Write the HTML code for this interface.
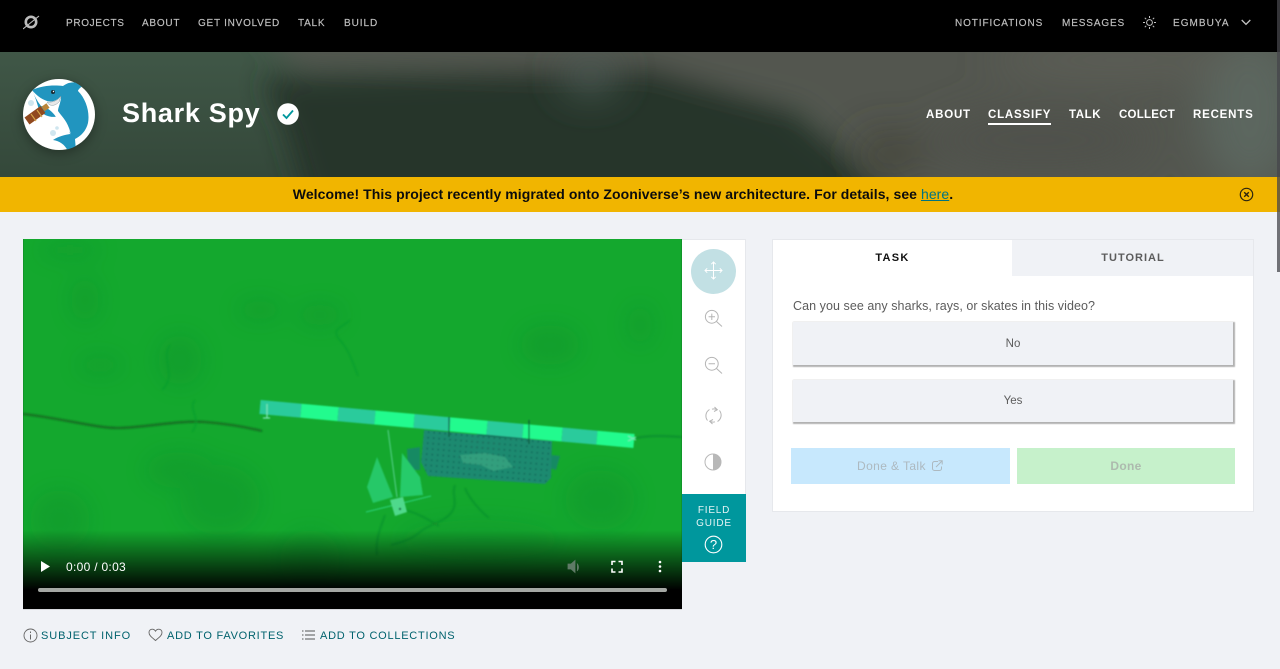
<!DOCTYPE html>
<html lang="en"><head><meta charset="utf-8"><title>Shark Spy</title>
<style>
html,body{margin:0;padding:0;width:1280px;height:669px;overflow:hidden;background:#f0f2f6;font-family:"Liberation Sans",sans-serif}
.a{position:absolute;white-space:nowrap}
a{text-decoration:none;color:inherit}
#top span{position:absolute;top:16px;line-height:13px;font-size:10px;letter-spacing:.75px;color:#c0c0c0;white-space:nowrap;-webkit-text-stroke:.15px #c0c0c0;padding-top:1px}
#pn span{position:absolute;top:108px;line-height:14px;font-size:11.5px;letter-spacing:.8px;color:#fff;font-weight:bold;white-space:nowrap}
svg{position:absolute;display:block}
</style></head><body>
<div class="a" style="left:0;top:0;width:1280px;height:52px;background:#000"></div>

<svg style="left:0;top:52px" width="1280" height="125" viewBox="0 52 1280 125">
<defs>
<linearGradient id="hg" x1="0" y1="0" x2="0" y2="1"><stop offset="0" stop-color="#405747"/><stop offset="1" stop-color="#34483a"/></linearGradient>
<filter id="b" x="-20%" y="-50%" width="140%" height="200%"><feGaussianBlur stdDeviation="13"/></filter>
<filter id="b2" x="-30%" y="-80%" width="160%" height="260%"><feGaussianBlur stdDeviation="20"/></filter></defs>
<rect x="0" y="52" width="1280" height="125" fill="url(#hg)"/>
<g filter="url(#b)">
<polygon points="250,20 1320,20 1320,220 920,220 800,110 660,72 300,68" fill="#52564f"/>
<polygon points="262,78 650,68 790,110 915,215 310,215 285,130" fill="#28352b"/>
</g>
<g filter="url(#b2)">
<ellipse cx="1250" cy="110" rx="50" ry="80" fill="#5c665f"/>
<ellipse cx="1040" cy="140" rx="110" ry="30" fill="#4f514b"/>
<ellipse cx="890" cy="155" rx="35" ry="24" fill="#3f4034" opacity=".7"/>
<ellipse cx="1120" cy="60" rx="130" ry="14" fill="#5e6059"/>
<ellipse cx="590" cy="76" rx="28" ry="18" fill="#4d5b56"/>
</g>
</svg>

<!-- top nav -->
<svg style="left:23px;top:14px" width="18" height="18" viewBox="0 0 18 18" fill="none" stroke="#bcbcbc"><circle cx="8" cy="8" r="5.200" stroke-width="2.600"/><path d="M0 15L16 2" stroke-width="1.100"/></svg>
<div id="top">
<span style="left:66px;letter-spacing:.65px">PROJECTS</span><span style="left:142px">ABOUT</span><span style="left:198px">GET INVOLVED</span><span style="left:298px">TALK</span><span style="left:344px;letter-spacing:.95px">BUILD</span>
<span style="left:955px;letter-spacing:.9px">NOTIFICATIONS</span><span style="left:1062px;letter-spacing:.87px">MESSAGES</span><span style="left:1173px;letter-spacing:1.05px">EGMBUYA</span>
</div>
<svg style="left:1143px;top:16px" width="13" height="13" viewBox="0 0 13 13" fill="none" stroke="#c4c4c4" stroke-width="1"><circle cx="6.500" cy="6.500" r="2.900"/><path d="M6.500 0v2M6.500 11v2M0 6.500h2M11 6.500h2M1.800 1.800l1.400 1.400M9.800 9.800l1.400 1.400M1.800 11.200l1.400-1.400M9.800 3.200l1.400-1.400"/></svg>
<svg style="left:1241px;top:19px" width="10" height="7" viewBox="0 0 10 7" fill="none" stroke="#c4c4c4" stroke-width="1.300"><path d="M.7 1l4.300 4.300L9.300 1"/></svg>

<!-- avatar -->
<div class="a" style="left:23px;top:79px;width:72px;height:71px;border-radius:50%;background:#fff;box-shadow:0 3px 12px rgba(0,0,0,.35)"></div>
<svg style="left:23px;top:79px" width="72" height="72" viewBox="0 0 72 72">
<defs><clipPath id="c"><circle cx="36" cy="35.500" r="35.800"/></clipPath></defs>
<g clip-path="url(#c)">
<circle cx="8" cy="24" r="3" fill="#cfe6ef"/><circle cx="30" cy="54" r="3" fill="#cfe6ef"/><circle cx="34" cy="49" r="1.800" fill="#cfe6ef"/>
<path d="M9 11C20 6 32 6 40 7C44 4 50 1 62 6C57 8 55 11 55 12C63 20 67 33 65 44C63 52 58 57 52 60L53 72L45 72C42 66 37 62 30 61C36 57 42 56 47 55C46 48 42 42 36 37C30 39 22 38 16 31C14 24 12 17 9 11z" fill="#2195bf"/>
<path d="M9 11C13 16 18 20 24 22C30 24 36 20 38 17C38 24 35 28 35 32C39 38 45 42 48 56C45 47 39 42 33 38C30 33 24 28 18 27C14 22 11 16 9 11z" fill="#fff"/>
<path d="M24 23C30 24 35 21 38 17L36 23C32 27 27 28 24 23z" fill="#e8e8e8" stroke="#8a9a9f" stroke-width=".5"/>
<circle cx="30" cy="13" r="2" fill="#1c2c33"/><circle cx="30.500" cy="12.500" r=".7" fill="#fff"/>
<path d="M4 42L20 30.500" stroke="#91491f" stroke-width="8.500"/>
<path d="M20 30L25 26.500" stroke="#b9853a" stroke-width="5.500"/>
<path d="M8 35l5 7M14 31l5 7" stroke="#d6a648" stroke-width="1.100"/>
</g>
</svg>

<div class="a" style="left:122px;top:96px;line-height:34px;font-size:27px;letter-spacing:.7px;color:#fff;font-weight:bold;">Shark Spy</div>
<svg style="left:277px;top:103px" width="22" height="22" viewBox="0 0 22 22"><circle cx="11" cy="11" r="10.800" fill="#fff"/><path d="M6 11.500l3.500 3.500L16 7.500" fill="none" stroke="#00979d" stroke-width="1.800"/></svg>

<div id="pn">
<span style="left:926px">ABOUT</span><span style="left:988px">CLASSIFY</span><span style="left:1069px;letter-spacing:.6px">TALK</span><span style="left:1119px;letter-spacing:.25px">COLLECT</span><span style="left:1193px">RECENTS</span>
</div>
<div class="a" style="left:988px;top:123px;width:63px;height:2px;background:#fff"></div>

<!-- banner -->
<div class="a" style="left:0;top:177px;width:1280px;height:35px;background:#f1b500"></div>
<div class="a" style="left:0;top:186px;width:1246px;text-align:center;line-height:17px;font-size:14px;letter-spacing:.062px;font-weight:bold;color:#0c0c0c;">Welcome! This project recently migrated onto Zooniverse’s new architecture. For details, see <a href="#" style="color:#007482;font-weight:normal;text-decoration:underline">here</a>.</div>
<svg style="left:1239px;top:187px" width="15" height="15" viewBox="0 0 15 15" fill="none" stroke="#2a2410"><circle cx="7.500" cy="7.500" r="6.200" stroke-width="1.200"/><path d="M5.200 5.200l4.600 4.600M9.800 5.200l-4.600 4.600" stroke-width="1.400"/></svg>

<!-- video -->
<svg style="left:23px;top:239px" width="659" height="370" viewBox="23 239 659 370">
<defs>
<linearGradient id="g" x1="0" y1="0" x2="0" y2="1"><stop offset="0" stop-color="#000" stop-opacity="0"/><stop offset="1" stop-color="#000"/></linearGradient>
<filter id="v" x="-60%" y="-60%" width="220%" height="220%"><feGaussianBlur stdDeviation="11"/></filter>
<filter id="v1" x="-5%" y="-20%" width="110%" height="140%"><feGaussianBlur stdDeviation="1"/></filter>
<filter id="v2" x="-5%" y="-30%" width="110%" height="160%"><feGaussianBlur stdDeviation=".7"/></filter>
<pattern id="h" width="5.500" height="5.500" patternUnits="userSpaceOnUse" patternTransform="rotate(5)"><rect width="5.500" height="5.500" fill="#1d8a70"/><rect x="1.800" y="1.800" width="1.800" height="1.800" fill="#166f5e"/></pattern>
</defs>
<rect x="23" y="239" width="659" height="370" fill="#14a82e"/>
<g filter="url(#v)" fill="#0e8f2a" opacity=".35">
<ellipse cx="85" cy="300" rx="14" ry="22"/><ellipse cx="260" cy="310" rx="22" ry="10"/><ellipse cx="320" cy="315" rx="22" ry="11"/>
<ellipse cx="180" cy="360" rx="22" ry="25"/><ellipse cx="100" cy="365" rx="22" ry="9"/><ellipse cx="70" cy="250" rx="30" ry="8"/>
<ellipse cx="550" cy="345" rx="30" ry="20"/><ellipse cx="640" cy="325" rx="12" ry="20"/>
<ellipse cx="60" cy="520" rx="30" ry="30"/><ellipse cx="220" cy="500" rx="40" ry="35"/><ellipse cx="310" cy="560" rx="30" ry="30"/>
<ellipse cx="600" cy="500" rx="35" ry="30"/><ellipse cx="180" cy="470" rx="34" ry="18"/><ellipse cx="480" cy="540" rx="80" ry="20"/>
</g>
<g filter="url(#v1)" fill="none">
<path d="M23 414C60 418 95 428 118 428S180 420 205 422 250 428 262 431" stroke="#17541f" stroke-width="1.600"/>
<path d="M636 438c15-3 30-2 46-1" stroke="#117a2b" stroke-width="1"/>
<path d="M350 320c-8 8-18 8-12 18 10 10 14 22 20 38M170 345c-10 15 8 30-8 45M195 400c-8 10 8 18-3 32" stroke="#109a2c" stroke-width="1"/>
<path d="M455 485c-4 10 4 18-4 28-6 8-22 12-30 18-6 6-14 10-30 14M465 488c4 10 14 22 24 30M405 510c15 4 24 10 34 16M385 515c-4 12-10 24-8 40" stroke="#0d8a29" stroke-width="1.100"/>
</g>
<g filter="url(#v2)">
<polygon points="407,449 420,447 420,470 408,470" fill="#158a64"/>
<polygon points="552,455 560,456 556,470 550,468" fill="#158a64"/>
<polygon points="424,430 552,441 551,478 545,484 428,476 421,462" fill="url(#h)"/>
<path d="M460 455l25-2 20 4 8 10-20 4-12-6-18-2z" fill="#4fbf90" opacity=".4"/>
<polygon points="470,430 510,432 530,440 480,436" fill="#16755f"/>
<polygon points="377,457 367,487 373,503 393,497" fill="#25c868"/>
<polygon points="402,453 420,477 423,495 400,497" fill="#26cb6a"/>
<path d="M388 430l9 67" stroke="#56d28e" stroke-width="1"/>
<path d="M366 512l65-16" stroke="#2bd27a" stroke-width="1"/>
<polygon points="390,500 403,497 407,512 395,516" fill="#4fd98c"/>
<circle cx="400" cy="509" r="1.200" fill="#116b3f"/>
<g stroke-width="14">
<path d="M260 407L301 410.700" stroke="#29cb9c"/>
<path d="M301 410.700L338 414.100" stroke="#20fb8e"/>
<path d="M338 414.100L375 417.500" stroke="#29cb9c"/>
<path d="M375 417.500L414 421" stroke="#20fb8e"/>
<path d="M414 421L450 424.300" stroke="#29cb9c"/>
<path d="M450 424.300L487 427.700" stroke="#20fb8e"/>
<path d="M487 427.700L523 431" stroke="#29cb9c"/>
<path d="M523 431L562 434.500" stroke="#20fb8e"/>
<path d="M562 434.500L597 437.700" stroke="#29cb9c"/>
<path d="M597 437.700L634 441" stroke="#20fb8e"/>
</g>
<path d="M449 417v20M529 420v24" stroke="#0d5a3b" stroke-width="1.200"/>
<path d="M267 404v14M263 418h7M628 436l8 4M628 441l8-4" stroke="#7ce7b9" stroke-width="1.200"/>
</g>
<rect x="23" y="530" width="659" height="60" fill="url(#g)"/>
<rect x="23" y="589" width="659" height="20" fill="#000"/>
<rect x="38" y="588" width="629" height="4" rx="2" fill="#a5a8a4"/>
<path d="M41 561v11l9-5.500z" fill="#fff"/>
<text x="66" y="571" font-family="Liberation Sans" font-size="12" letter-spacing=".3" fill="#fff">0:00 / 0:03</text>
<path d="M568 564h3l4-3.500v12l-4-3.500h-3zM577 563.500c2 2 2 5.500 0 7.500" fill="#5f7a66" stroke="#5f7a66" stroke-width=".8"/>
<path d="M612 565v-3.500h3.500M618.500 561.500h3.500v3.500M622 568.500v3.500h-3.500M615.500 572H612v-3.500" fill="none" stroke="#fff" stroke-width="1.600"/>
<circle cx="660" cy="562" r="1.300" fill="#fff"/><circle cx="660" cy="566.500" r="1.300" fill="#fff"/><circle cx="660" cy="571" r="1.300" fill="#fff"/>
</svg>
<div class="a" style="left:23px;top:239px;width:659px;height:371px;box-sizing:border-box;border:solid rgba(0,0,0,.1);border-width:0 1px 1px 1px"></div>

<!-- toolbar -->
<div class="a" style="left:682px;top:239px;width:63px;height:255px;background:#fff;border:solid #e6e8ec;border-width:1px 1px 0 0"></div>
<div class="a" style="left:691px;top:249px;width:45px;height:45px;border-radius:50%;background:#c2e0e4"></div>
<svg style="left:704px;top:261px" width="19" height="19" viewBox="0 0 19 19" fill="none" stroke="#fff" stroke-width="1"><path d="M9.500 1v17M1 9.500h17M7.300 3.200L9.500 1l2.200 2.200M7.300 15.800l2.200 2.200 2.200-2.200M3.200 7.300L1 9.500l2.200 2.200M15.800 7.300L18 9.500l-2.200 2.200"/></svg>
<svg style="left:704px;top:309px" width="19" height="19" viewBox="0 0 19 19" fill="none" stroke="#b5b5b5" stroke-width="1"><circle cx="7.800" cy="7.800" r="6.400"/><path d="M12.500 12.500l5.500 5M7.800 4.600v6.400M4.600 7.800H11"/></svg>
<svg style="left:704px;top:356px" width="19" height="19" viewBox="0 0 19 19" fill="none" stroke="#b5b5b5" stroke-width="1"><circle cx="7.800" cy="7.800" r="6.400"/><path d="M12.500 12.500l5.500 5M4.600 7.800H11"/></svg>
<svg style="left:704px;top:406px" width="19" height="19" viewBox="0 0 19 19" fill="none" stroke="#b5b5b5" stroke-width="1"><path d="M5.500 3.500C1.500 6 .8 11 3.500 14.500M13.500 15.500c4-2.500 4.700-7.500 2-11M8 3.200c1.800-.6 3.600-.4 5 .6M11 15.800c-1.800.6-3.600.4-5-.6M10.500 1l2.800 2.800L10 5.500M8.500 18l-2.800-2.800L9 13.500"/></svg>
<svg style="left:704px;top:453px" width="18" height="18" viewBox="0 0 18 18"><circle cx="9" cy="9" r="8" fill="#fff" stroke="#b8b8b8" stroke-width="1"/><path d="M9 1a8 8 0 0 1 0 16z" fill="#b8b8b8"/></svg>

<div class="a" style="left:682px;top:494px;width:64px;height:68px;background:#00979d"></div>
<div class="a" style="left:682px;top:504px;width:64px;text-align:center;font-size:10px;line-height:13px;letter-spacing:.8px;color:#e4f3f4;white-space:normal">FIELD<br>GUIDE</div>
<svg style="left:704px;top:535px" width="19" height="19" viewBox="0 0 19 19" fill="none" stroke="#fff"><circle cx="9.500" cy="9.500" r="8.300" stroke-width="1.100"/></svg>
<div class="a" style="left:704px;top:536px;width:19px;text-align:center;font-size:13px;line-height:17px;color:#fff">?</div>

<!-- bottom links -->
<svg style="left:23px;top:628px" width="15" height="15" viewBox="0 0 15 15" fill="none" stroke="#666"><circle cx="7.500" cy="7.500" r="6.500" stroke-width=".9"/><path d="M7.500 6.500v5M7.500 3.500v1.500" stroke-width="1"/></svg>
<svg style="left:148px;top:628px" width="15" height="14" viewBox="0 0 15 14" fill="none" stroke="#666" stroke-width=".9"><path d="M7.500 12.500C4 9.500 1 7.500 1 4.500 1 2.500 2.500 1.200 4.200 1.200c1.400 0 2.600.8 3.300 2 .7-1.200 1.900-2 3.300-2C12.500 1.200 14 2.500 14 4.500c0 3-3 5-6.500 8z"/></svg>
<svg style="left:302px;top:630px" width="13" height="10" viewBox="0 0 13 10" stroke="#555" stroke-width="1"><path d="M3 1h10M3 5h10M3 9h10M0 1h1.500M0 5h1.500M0 9h1.500"/></svg>
<div class="a" style="left:41px;top:629px;font-size:11px;line-height:14px;letter-spacing:.9px;color:#00626d">SUBJECT INFO</div>
<div class="a" style="left:167px;top:629px;font-size:11px;line-height:14px;letter-spacing:.75px;color:#00626d">ADD TO FAVORITES</div>
<div class="a" style="left:320px;top:629px;font-size:11px;line-height:14px;letter-spacing:.75px;color:#00626d">ADD TO COLLECTIONS</div>

<!-- task panel -->
<div class="a" style="left:772px;top:239px;width:482px;height:273px;box-sizing:border-box;background:#fff;border:1px solid #e6e8ec"></div>
<div class="a" style="left:1012px;top:240px;width:241px;height:36px;background:#f0f2f6"></div>
<div class="a" style="left:773px;top:251px;width:239px;text-align:center;font-size:11px;line-height:14px;font-weight:bold;letter-spacing:1.300px;color:#111">TASK</div>
<div class="a" style="left:1012px;top:251px;width:242px;text-align:center;font-size:11px;line-height:14px;font-weight:bold;letter-spacing:1px;color:#5c5c5c">TUTORIAL</div>
<div class="a" style="left:793px;top:298px;font-size:12.500px;line-height:16px;letter-spacing:.06px;color:#5c5c5c">Can you see any sharks, rays, or skates in this video?</div>
<div class="a" style="left:793px;top:322px;width:440px;height:43px;line-height:44px;background:#f0f2f6;box-shadow:1px 1px 1px 1px #b2b2b2;text-align:center;font-size:11.500px;color:#5c5c5c">No</div>
<div class="a" style="left:793px;top:380px;width:440px;height:42px;line-height:43px;background:#f0f2f6;box-shadow:1px 1px 1px 1px #b2b2b2;text-align:center;font-size:11.500px;color:#5c5c5c">Yes</div>
<div class="a" style="left:791px;top:448px;width:219px;height:36px;background:#c7e8fd"></div>
<div class="a" style="left:857px;top:459px;font-size:12px;line-height:14px;letter-spacing:.4px;color:#adb9c0">Done &amp; Talk</div>
<svg style="left:932px;top:460px" width="11" height="11" viewBox="0 0 11 11" fill="none" stroke="#adb9c0" stroke-width="1"><path d="M6 1.500H2.500a2 2 0 0 0-2 2v5a2 2 0 0 0 2 2h5a2 2 0 0 0 2-2V6.500M4 7l6-6M6.500 .8H10.200V4.500"/></svg>
<div class="a" style="left:1017px;top:448px;width:218px;height:36px;background:#c6f1cb"></div>
<div class="a" style="left:1017px;top:459px;width:218px;text-align:center;font-size:12px;line-height:14px;font-weight:bold;letter-spacing:.3px;color:#adbaae">Done</div>

<!-- scrollbar -->
<div class="a" style="left:1277px;top:0;width:3px;height:272px;background:rgba(70,70,75,.75)"></div>
</body></html>
